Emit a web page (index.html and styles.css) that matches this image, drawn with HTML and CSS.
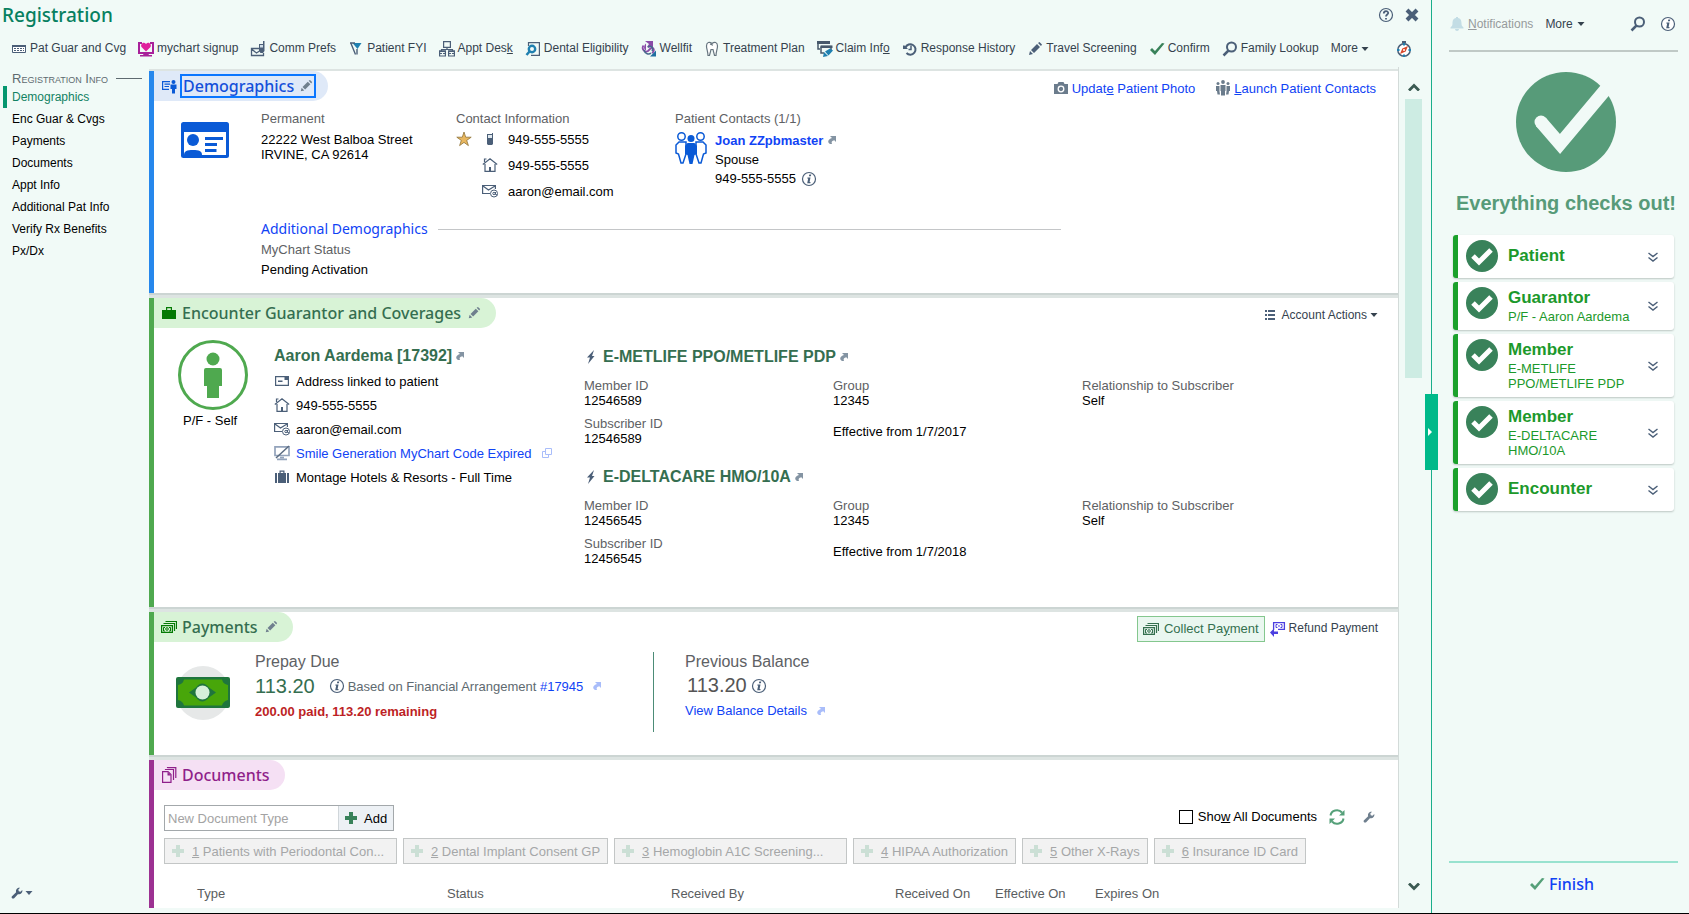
FILE: index.html
```html
<!DOCTYPE html>
<html lang="en">
<head>
<meta charset="utf-8">
<title>Registration</title>
<link rel="stylesheet" href="styles.css">
</head>
<body>
<svg class="sprite" aria-hidden="true">
  <symbol id="card" viewBox="0 0 16 16"><path d="M1.500 4.500h13v7h-13z" fill="#fff" stroke="#4b5f78"/><path d="M1 4h14v2H1z" fill="#4b5f78"/><path d="M3 7.500h10M3 9.500h10" stroke="#4b5f78" stroke-dasharray="2 1"/></symbol>
  <symbol id="mychart" viewBox="0 0 16 16"><path d="M0 1h4v2H2v8h12V3h-2V1h4v12H0z" fill="#a8219a"/><path d="M6 12h4l1 2h3v1.500H2V14h3z" fill="#a8219a"/><path d="M8 10.500 3.500 6C2 3.500 5.500 0 8 3c2.500-3 6 .5 4.500 3z" fill="#e0209c"/></symbol>
  <symbol id="comm" viewBox="0 0 16 16"><path d="M9 7.500H1.500v7h12V12M1.500 8l5 4 3-2" fill="none" stroke="#4b5f78" stroke-width="1.300"/><path d="M9 3h4V0h1.500v10l-1.500 2h-2.500L9 10z" fill="#4b5f78"/><path d="M10 4h3v2.500h-3z" fill="#cfdce6"/></symbol>
  <symbol id="flag" viewBox="0 0 16 16"><path d="M4.500 2H13.500L9.500 8z" fill="#1f80b0"/><path d="m2.800 2 4.700 11.500M9 13.500V8" fill="none" stroke="#4b5f78" stroke-width="1.400"/><path d="M2 2h5" stroke="#4b5f78" stroke-width="1.500"/></symbol>
  <symbol id="appt" viewBox="0 0 16 16"><path d="M4.600 .6h6.800v5.800H4.600zM8 6.500V9M2.500 10V8.500h11V10" fill="none" stroke="#4b5f78" stroke-width="1.200"/><path d="M0 9.500h7V11H0zm9 0h7V11H9zM1 12h2v1H1zm3 0h2v1H4zm6 0h2v1h-2zm3 0h2v1h-2z" fill="#4b5f78"/><path d="M.6 10h5.800v5H.6zm9 0h5.800v5H9.600z" fill="none" stroke="#4b5f78" stroke-width="1.200"/></symbol>
  <symbol id="dental" viewBox="0 0 16 16"><path d="M3.500 5V1.600h10.900v12.800H6" fill="none" stroke="#4b5f78" stroke-width="1.200"/><circle cx="7" cy="8" r="3.200" fill="none" stroke="#1f80b0" stroke-width="2.400"/><path d="m4.500 10.500-3 3.500" stroke="#1f80b0" stroke-width="2.500"/></symbol>
  <symbol id="wellfit" viewBox="0 0 16 16"><path d="M5 9.500C2 8 3 4 5 2.500M4 0h8v7l-2-2-2 2-2-1 2-3z" fill="#8b4ba8"/><path d="M2.500 4.500C0 8 4 12 7 10l3-3c3-1 4 3 1 5" fill="none" stroke="#8b4ba8" stroke-width="1.800"/><path d="M3 9c1 4 5 5 7 3m-3-6C10 4 13 7 11 10" fill="none" stroke="#47698c" stroke-width="1.500"/><path d="M9 15.500h6v-6z" fill="#1f6fa0"/></symbol>
  <symbol id="tooth" viewBox="0 0 16 16"><path d="M8 2.500C5.500.5 2.500 1 2.500 5c0 3 1.300 5 1.500 9.500h1.500L7 8.500h2l1.500 6H12c.2-4.500 1.500-6.500 1.500-9.500 0-4-3-4.500-5.500-2.500zM6 3l3 1.300" fill="#fff" stroke="#66757f" stroke-width="1.200"/></symbol>
  <symbol id="claim" viewBox="0 0 16 16"><path d="M0 0h13v3H0z" fill="#47586b"/><path d="M1 3v5h2M4 5.500h10V9M4 5.500V12h3" fill="none" stroke="#47586b" stroke-width="1.500"/><path d="M3.500 4.500h12v2.500h-12z" fill="#47586b"/><path d="m7 11 4 4-5 1zM8 10.500 13 7.500l3 2-4.500 5z" fill="#1f80b0"/></symbol>
  <symbol id="history" viewBox="0 0 16 16"><path d="M3.500 6.500a5.200 5.200 0 1 1 1 5.500" fill="none" stroke="#4b5f78" stroke-width="2"/><path d="M1 4.500h1.500l3.500 3.500H1z" fill="#4b5f78"/><path d="M9 4.500v4H6.500" fill="none" stroke="#4b5f78" stroke-width="1.500"/></symbol>
  <symbol id="pencil" viewBox="0 0 16 16"><path d="m2 14 1-4 3 3zm2-5 6-6 3 3-6 6zm7-7 1.500-1 2.500 2.500-1 1.500z" fill="currentColor"/></symbol>
  <symbol id="check" viewBox="0 0 16 16"><path d="m1 9 2-2 3 3 7-8 2.500.5L6 14z" fill="currentColor"/></symbol>
  <symbol id="search" viewBox="0 0 16 16"><circle cx="9.500" cy="6" r="4.500" fill="none" stroke="currentColor" stroke-width="2"/><path d="m6.500 9.500-5 5" stroke="currentColor" stroke-width="2.500"/></symbol>
  <symbol id="compass" viewBox="0 0 16 16"><circle cx="8" cy="9" r="6.200" fill="#fff" stroke="#4b5f78" stroke-width="1.500"/><path d="M6 0h4v2.500H6z" fill="#4b5f78"/><path d="M8 2v2.500M8 13.500V16M1 9h2.500m9 0H15" stroke="#1f80b0" stroke-width="2"/><path d="m4 13 2.300-5.500L12 5l-2.300 5.500z" fill="#d9482b"/><circle cx="8" cy="9" r="1" fill="#fff"/></symbol>
  <symbol id="help" viewBox="0 0 16 16"><circle cx="8" cy="8" r="6.500" fill="none" stroke="#4b5f78" stroke-width="1.200"/><path d="M5.800 6.500c0-3 4.400-3 4.400-.5C10.200 7.500 8 7.500 8 9.500M8 11v1.500" fill="none" stroke="#4b5f78" stroke-width="1.800"/></symbol>
  <symbol id="close" viewBox="0 0 16 16"><path d="m3 3 10 10M13 3 3 13" stroke="#4b5f78" stroke-width="4"/></symbol>
  <symbol id="info" viewBox="0 0 16 16"><circle cx="8" cy="8" r="6.500" fill="#fff" stroke="#4b5f78" stroke-width="1.200"/><path d="M8.300 3.500h2l-.4 1.800h-2zM6.500 6.500h3L8.600 11h1l-.3 1.200H6.200L7.200 7.600H6.200z" fill="#4b5f78"/></symbol>
  <symbol id="bell" viewBox="0 0 16 16"><path d="M7 1h2v1c3 .5 3.500 3 3.500 5.500 0 2 .5 2.500 2 4v1h-13v-1c1.500-1.500 2-2 2-4C3.500 5 4 2.500 7 2zM6 13h4c0 2.500-4 2.500-4 0z" fill="#c3dde5"/></symbol>
  <symbol id="person-card" viewBox="0 0 16 16"><path d="M8 11.400H1.600V3.600H9M3.500 6.200H9M3.500 8.500h4.500" fill="none" stroke="#0a5ad6" stroke-width="1.200"/><circle cx="12.500" cy="4" r="2" fill="#0a5ad6"/><path d="M9.500 6.500h6V11H14v4.500h-3V11H9.500z" fill="#0a5ad6"/></symbol>
  <symbol id="idcard" viewBox="0 0 48 36"><rect width="48" height="36" rx="2.500" fill="#0a5ad6"/><path d="M3 10h42v23H3z" fill="#fff"/><circle cx="12" cy="18" r="6" fill="#0a5ad6"/><path d="M3 33c0-4 3-5 9-5s9 1 9 5z" fill="#0a5ad6"/><path d="M24 16.500h18M24 22.500h12M24 28.500h11.500" stroke="#0a5ad6" stroke-width="3"/></symbol>
  <symbol id="star" viewBox="0 0 16 16"><path d="m8 1 1.700 5.200h5.500l-4.500 3.200 1.700 5.200L8 11.400l-4.400 3.200 1.700-5.200L.8 6.200h5.500z" fill="#e9b75f" stroke="#8f7338" stroke-width=".8"/></symbol>
  <symbol id="phone" viewBox="0 0 16 16"><path d="M5 3h5V2h1v11l-1 1H6l-1-1z" fill="#4b5f78"/><path d="M6 4h4v3H6z" fill="#dfe8ee"/></symbol>
  <symbol id="home" viewBox="0 0 16 16"><path d="M3 7v7.400h10V7M.8 7.500 8 1.800l7.200 5.700M2.500 5V2h2M8 14v-4" fill="none" stroke="#4b5f78" stroke-width="1.200"/><path d="M7 10h2v4H7z" fill="#4b5f78"/></symbol>
  <symbol id="mail" viewBox="0 0 16 16"><path d="M8 10.500H.6v-8h12.800V6M1 3l5.500 4L13 3" fill="none" stroke="#4b5f78" stroke-width="1.200"/><circle cx="12" cy="10.500" r="3.500" fill="#fff" stroke="#4b5f78"/><circle cx="12" cy="10.500" r="1.200" fill="none" stroke="#4b5f78"/><path d="M13.500 9v2.500l2 .5" fill="none" stroke="#4b5f78"/></symbol>
  <symbol id="people-big" viewBox="0 0 32 32"><g fill="#fff" stroke="#0a5ad6" stroke-width="1.500"><circle cx="6.500" cy="4.500" r="3.700"/><circle cx="25.500" cy="4.500" r="3.700"/><path d="M11 10H4l-3 3v8l2.500 1L6 31h2l3-9zm10 0h7l3 3v8l-2.500 1L26 31h-2l-3-9z"/></g><circle cx="16" cy="6.500" r="3.500" fill="#0a5ad6"/><path d="M12.500 11h7l2.500 3v8l-2.500 1L17.500 32h-3l-2-9L10 22v-8z" fill="#0a5ad6"/></symbol>
  <symbol id="jump" viewBox="0 0 10 10"><path d="M3 1h6v6L7.300 5.300C5 5.500 4 7 5 9H3C0 7.500 1 4 5 3z" fill="currentColor"/></symbol>
  <symbol id="camera" viewBox="0 0 16 16"><path d="M1 4h3.500l1-2h5l1 2H15v10H1z" fill="#6b7c8c"/><circle cx="8" cy="9" r="2.800" fill="#6b7c8c" stroke="#fff" stroke-width="1.300"/></symbol>
  <symbol id="people" viewBox="0 0 16 16"><g fill="#6b7c8c"><circle cx="8" cy="2" r="1.900"/><circle cx="3" cy="3.500" r="1.500"/><circle cx="13" cy="3.500" r="1.500"/><path d="M5.500 5h5v6H10v4.500H6V11h-.5zM1 6h3.500v5.500L5 14.500H2.500L2 11H1zm14 0h-3.500v5.500l-.5 3h2.500L14 11h1z"/></g></symbol>
  <symbol id="briefcase" viewBox="0 0 16 16"><path d="M1 5h4V2h6v3h4v9H1zm5.200 0h3.600V3.200H6.200z" fill="#047a04" fill-rule="evenodd"/></symbol>
  <symbol id="man" viewBox="0 0 70 70"><circle cx="35" cy="35" r="33.500" fill="#fff" stroke="#4fa94f" stroke-width="3"/><circle cx="35" cy="19" r="6.500" fill="#4fa94f"/><path d="M26 30q0-2 2-2h14q2 0 2 2v16h-3v12H29V46h-3z" fill="#4fa94f"/></symbol>
  <symbol id="letter" viewBox="0 0 16 16"><path d="M1.600 3.600h12.800v8.800H1.600z" fill="#fff" stroke="#4b5f78" stroke-width="1.200"/><path d="M10.500 4h3.500v3h-3.500zM4 7.500h4.500V9H4z" fill="#4b5f78"/></symbol>
  <symbol id="screen-off" viewBox="0 0 16 16"><path d="M1 1.800h14v8.700H1zM3 14.300h10M6 12.500h4" fill="none" stroke="#93a3bb" stroke-width="1.700"/><path d="M2 13 15 1" stroke="#5a6b80" stroke-width="1.500"/></symbol>
  <symbol id="suitcase" viewBox="0 0 16 16"><path d="M1 4h2v10H1zm12 0h2v10h-2zM4 4h1.500V1.500h5V4H12v10H4zm2.700 0h2.600V2.800H6.700z" fill="#4b5f78" fill-rule="evenodd"/></symbol>
  <symbol id="copy" viewBox="0 0 10 10"><path d="M3.500.5h6v6h-6zM3 3.500H.5v6h6V7" fill="none" stroke="#a9bdfa"/></symbol>
  <symbol id="bolt" viewBox="0 0 16 16"><path d="M10 1 3 8.500h3L4 15l6.500-8H8z" fill="#4b5f78"/></symbol>
  <symbol id="list" viewBox="0 0 16 16"><path d="M2 4h2m1 0h7M2 8h2m1 0h7M2 12h2m1 0h7" stroke="#4b5f78" stroke-width="1.800"/></symbol>
  <symbol id="cash" viewBox="0 0 16 16"><path d="M.6 6.600h10.800v6.800H.6zM2.500 4.500h11V12M4.500 2.500h11V10" fill="none" stroke="currentColor" stroke-width="1.200"/><path d="M4 8.500H2.500V12H4M8 8.500h1.500V12H8" fill="none" stroke="currentColor"/><circle cx="6" cy="10" r="1.300" fill="none" stroke="currentColor"/></symbol>
  <symbol id="refund" viewBox="0 0 16 16"><path d="M3.600 9V1.600h10.800v6.800H8" fill="none" stroke="#4c3fe0" stroke-width="1.300"/><path d="M7.500 3.500H6v3h1.500m3-3H12v3h-1.500M9 4v2" fill="none" stroke="#4c3fe0"/><path d="m0 11.500 4-4v3h4V13H4v3z" fill="#4c3fe0"/></symbol>
  <symbol id="bill" viewBox="0 0 54 54"><circle cx="27" cy="27" r="27" fill="#e6e8e8"/><rect y="11" width="54" height="31" rx="2" fill="#1f753d"/><path d="M8 13.500h38q1 4.500 6 5.500v15q-5 1-6 5.500H8Q7 35 2 34V19q5-1 6-5.500z" fill="#48a60a"/><path d="m13 26.500 7-5q6-8 13 0l7 5-7 5q-7 8-13 0z" fill="#1f753d"/><circle cx="26.500" cy="26.500" r="7" fill="#d6f0d9"/></symbol>
  <symbol id="docs" viewBox="0 0 16 16"><path d="M1.600 4.600H7l3 3v7.800H1.600zM4.500 3V2.500h8V13M6.500 1V.6h8.300V11" fill="none" stroke="#8f1f8a" stroke-width="1.200"/><path d="M6.500 5v3.500H10z" fill="#8f1f8a"/></symbol>
  <symbol id="plus" viewBox="0 0 12 12"><path d="M4 0h4v4h4v4H8v4H4V8H0V4h4z" fill="currentColor"/></symbol>
  <symbol id="refresh" viewBox="0 0 16 16"><path d="M1.500 6.500a6.500 6 0 0 1 11.500-3M14.500 9.500a6.500 6 0 0 1-11.500 3" fill="none" stroke="#55a079" stroke-width="2"/><path d="M15.500 1v5.500H10zM.5 15V9.500H6z" fill="#55a079"/></symbol>
  <symbol id="wrench" viewBox="0 0 16 16"><path d="m2 12 5-5c-.8-3 1.500-5.800 4.500-5L9.500 4l.5 2 2 .5 2-2c.8 3-2 5.500-5 5L4.500 14.200C3 15 1.200 13.500 2 12z" fill="currentColor"/></symbol>
  <symbol id="caret" viewBox="0 0 8 8"><path d="M.5 2h7L4 6z" fill="currentColor"/></symbol>
  <symbol id="up" viewBox="0 0 12 8"><path d="m1 7.500 5-5 5 5" fill="none" stroke="#3b5a52" stroke-width="2.800"/></symbol>
  <symbol id="down" viewBox="0 0 12 8"><path d="m1 .5 5 5 5-5" fill="none" stroke="#3b5a52" stroke-width="2.800"/></symbol>
  <symbol id="bigcheck" viewBox="0 0 100 100"><circle cx="50" cy="50" r="50" fill="#579b79"/><path d="M25 50 44 72 96 10" fill="none" stroke="#f1faf7" stroke-width="13"/><circle cx="25" cy="50" r="6.500" fill="#f1faf7"/></symbol>
  <symbol id="ok" viewBox="0 0 32 32"><circle cx="16" cy="16" r="16" fill="#39825a"/><path d="m7 16 6 6 12-12" fill="none" stroke="#fff" stroke-width="5"/></symbol>
  <symbol id="chevrons" viewBox="0 0 10 10"><path d="m.5 1 4.500 3.500L9.500 1m-9 4.500L5 9l4.500-3.500" fill="none" stroke="#4b5f78" stroke-width="1.400"/></symbol>
</svg>

<div class="app">
  <main class="main">
    <header class="titlebar">
      <h1>Registration</h1>
      <button class="plain" aria-label="Help"><svg class="icon"><use href="#help"/></svg></button>
      <button class="plain" aria-label="Close"><svg class="icon"><use href="#close"/></svg></button>
    </header>
    <div class="toolbar" role="toolbar">
      <button class="tool"><svg class="icon"><use href="#card"/></svg>Pat Guar and Cvg</button>
      <button class="tool"><svg class="icon"><use href="#mychart"/></svg>mychart signup</button>
      <button class="tool"><svg class="icon"><use href="#comm"/></svg>Comm Prefs</button>
      <button class="tool"><svg class="icon"><use href="#flag"/></svg>Patient FYI</button>
      <button class="tool"><svg class="icon"><use href="#appt"/></svg><span>Appt Des<u>k</u></span></button>
      <button class="tool"><svg class="icon"><use href="#dental"/></svg>Dental Eligibility</button>
      <button class="tool"><svg class="icon"><use href="#wellfit"/></svg>Wellfit</button>
      <button class="tool"><svg class="icon"><use href="#tooth"/></svg>Treatment Plan</button>
      <button class="tool"><svg class="icon"><use href="#claim"/></svg><span>Claim Inf<u>o</u></span></button>
      <button class="tool"><svg class="icon"><use href="#history"/></svg>Response History</button>
      <button class="tool"><svg class="icon slate"><use href="#pencil"/></svg>Travel Screening</button>
      <button class="tool"><svg class="icon green"><use href="#check"/></svg>Confirm</button>
      <button class="tool"><svg class="icon slate"><use href="#search"/></svg>Family Lookup</button>
      <button class="tool">More<svg class="caret"><use href="#caret"/></svg></button>
      <button class="tool compass" aria-label="Navigator"><svg class="icon"><use href="#compass"/></svg></button>
    </div>

    <div class="workspace">
      <nav class="nav">
        <h2>Registration Info</h2>
        <ul>
          <li class="active"><a href="#demographics">Demographics</a></li>
          <li><a href="#coverages">Enc Guar &amp; Cvgs</a></li>
          <li><a href="#payments">Payments</a></li>
          <li><a href="#documents">Documents</a></li>
          <li><a href="#appt-info">Appt Info</a></li>
          <li><a href="#additional">Additional Pat Info</a></li>
          <li><a href="#benefits">Verify Rx Benefits</a></li>
          <li><a href="#pxdx">Px/Dx</a></li>
        </ul>
        <button class="plain settings slate" aria-label="Settings"><svg class="icon small"><use href="#wrench"/></svg><svg class="caret"><use href="#caret"/></svg></button>
      </nav>

      <div class="content">
        <section class="panel blue" id="demographics">
          <header class="panel-head">
            <div class="tab"><svg class="icon"><use href="#person-card"/></svg><h2 class="focused">Demographics <svg class="icon edit"><use href="#pencil"/></svg></h2></div>
            <div class="actions wide">
              <a href="#photo"><svg class="icon"><use href="#camera"/></svg><span>Updat<u>e</u> Patient Photo</span></a>
              <a href="#contacts"><svg class="icon"><use href="#people"/></svg><span><u>L</u>aunch Patient Contacts</span></a>
            </div>
          </header>
          <div class="demo">
            <svg class="idcard"><use href="#idcard"/></svg>
            <div>
              <h3 class="label">Permanent</h3>
              <p class="address">22222 West Balboa Street<br>IRVINE, CA 92614</p>
            </div>
            <div>
              <h3 class="label">Contact Information</h3>
              <ul class="contact">
                <li><svg class="icon"><use href="#star"/></svg><svg class="icon"><use href="#phone"/></svg>949-555-5555</li>
                <li><span class="icon"></span><svg class="icon"><use href="#home"/></svg>949-555-5555</li>
                <li><span class="icon"></span><svg class="icon"><use href="#mail"/></svg>aaron@email.com</li>
              </ul>
            </div>
            <div>
              <h3 class="label">Patient Contacts (1/1)</h3>
              <div class="relative">
                <svg class="people-big"><use href="#people-big"/></svg>
                <div>
                  <p><a class="strong" href="#joan">Joan ZZpbmaster</a> <svg class="jump"><use href="#jump"/></svg></p>
                  <p>Spouse</p>
                  <p class="inline">949-555-5555 <svg class="icon"><use href="#info"/></svg></p>
                </div>
              </div>
            </div>
          </div>
          <div class="more-demo">
            <h3><a href="#more-demo">Additional Demographics</a></h3>
            <p class="label">MyChart Status</p>
            <p>Pending Activation</p>
          </div>
        </section>

        <section class="panel green-panel" id="coverages">
          <header class="panel-head">
            <div class="tab"><svg class="icon"><use href="#briefcase"/></svg><h2>Encounter Guarantor and Coverages <svg class="icon edit"><use href="#pencil"/></svg></h2></div>
            <div class="actions"><button class="tool"><svg class="icon"><use href="#list"/></svg>Account Actions<svg class="caret"><use href="#caret"/></svg></button></div>
          </header>
          <div class="coverage">
            <figure class="who"><svg class="man"><use href="#man"/></svg><figcaption>P/F - Self</figcaption></figure>
            <div class="guarantor">
              <h3 class="name">Aaron Aardema [17392]<svg class="jump"><use href="#jump"/></svg></h3>
              <ul>
                <li><svg class="icon"><use href="#letter"/></svg>Address linked to patient</li>
                <li><svg class="icon"><use href="#home"/></svg>949-555-5555</li>
                <li><svg class="icon"><use href="#mail"/></svg>aaron@email.com</li>
                <li><svg class="icon"><use href="#screen-off"/></svg><a href="#code">Smile Generation MyChart Code Expired</a><svg class="copy"><use href="#copy"/></svg></li>
                <li><svg class="icon"><use href="#suitcase"/></svg>Montage Hotels &amp; Resorts - Full Time</li>
              </ul>
            </div>
            <div class="plans">
              <article>
                <h3 class="name"><svg class="icon"><use href="#bolt"/></svg>E-METLIFE PPO/METLIFE PDP<svg class="jump"><use href="#jump"/></svg></h3>
                <dl class="plan">
                  <div><dt>Member ID</dt><dd>12546589</dd></div>
                  <div><dt>Group</dt><dd>12345</dd></div>
                  <div><dt>Relationship to Subscriber</dt><dd>Self</dd></div>
                  <div><dt>Subscriber ID</dt><dd>12546589</dd></div>
                  <div><dd>Effective from 1/7/2017</dd></div>
                </dl>
              </article>
              <article>
                <h3 class="name"><svg class="icon"><use href="#bolt"/></svg>E-DELTACARE HMO/10A<svg class="jump"><use href="#jump"/></svg></h3>
                <dl class="plan">
                  <div><dt>Member ID</dt><dd>12456545</dd></div>
                  <div><dt>Group</dt><dd>12345</dd></div>
                  <div><dt>Relationship to Subscriber</dt><dd>Self</dd></div>
                  <div><dt>Subscriber ID</dt><dd>12456545</dd></div>
                  <div><dd>Effective from 1/7/2018</dd></div>
                </dl>
              </article>
            </div>
          </div>
        </section>

        <section class="panel green-panel" id="payments">
          <header class="panel-head">
            <div class="tab"><svg class="icon cash"><use href="#cash"/></svg><h2>Payments <svg class="icon edit"><use href="#pencil"/></svg></h2></div>
            <div class="actions tight">
              <button class="collect"><svg class="icon"><use href="#cash"/></svg><span>Collect Pa<u>y</u>ment</span></button>
              <button class="tool"><svg class="icon"><use href="#refund"/></svg>Refund Payment</button>
            </div>
          </header>
          <div class="pay">
            <svg class="bill"><use href="#bill"/></svg>
            <div class="prepay">
              <h3>Prepay Due</h3>
              <p class="amount"><strong>113.20</strong><svg class="icon"><use href="#info"/></svg><span>Based on Financial Arrangement <a href="#17945">#17945</a></span><svg class="jump pale"><use href="#jump"/></svg></p>
              <p class="due">200.00 paid, 113.20 remaining</p>
            </div>
            <div class="previous">
              <h3>Previous Balance</h3>
              <p class="amount"><strong>113.20</strong><svg class="icon"><use href="#info"/></svg></p>
              <p class="details"><a href="#balance">View Balance Details</a><svg class="jump pale"><use href="#jump"/></svg></p>
            </div>
          </div>
        </section>

        <section class="panel purple" id="documents">
          <header class="panel-head"><div class="tab"><svg class="icon"><use href="#docs"/></svg><h2>Documents</h2></div></header>
          <div class="doc-bar">
            <div class="new-doc"><input type="text" aria-label="New Document Type" placeholder="New Document Type"><button><svg class="plus"><use href="#plus"/></svg>Add</button></div>
            <div class="doc-tools">
              <label><input type="checkbox"><span>Sho<u>w</u> All Documents</span></label>
              <button class="plain" aria-label="Refresh"><svg class="icon"><use href="#refresh"/></svg></button>
              <button class="plain wrench" aria-label="Configure"><svg class="icon small"><use href="#wrench"/></svg></button>
            </div>
          </div>
          <div class="quick">
            <button class="long" disabled><svg class="plus"><use href="#plus"/></svg><span><u>1</u> Patients with Periodontal Con...</span></button>
            <button disabled><svg class="plus"><use href="#plus"/></svg><span><u>2</u> Dental Implant Consent GP</span></button>
            <button class="long" disabled><svg class="plus"><use href="#plus"/></svg><span><u>3</u> Hemoglobin A1C Screening...</span></button>
            <button disabled><svg class="plus"><use href="#plus"/></svg><span><u>4</u> HIPAA Authorization</span></button>
            <button disabled><svg class="plus"><use href="#plus"/></svg><span><u>5</u> Other X-Rays</span></button>
            <button disabled><svg class="plus"><use href="#plus"/></svg><span><u>6</u> Insurance ID Card</span></button>
          </div>
          <table class="doc-table">
            <colgroup><col class="c-type"><col class="c-mid"><col class="c-mid"><col class="c-date"><col class="c-date"><col></colgroup>
            <thead><tr><th>Type</th><th>Status</th><th>Received By</th><th>Received On</th><th>Effective On</th><th>Expires On</th></tr></thead>
          </table>
        </section>
      </div>

      <div class="scroll">
        <button class="plain" aria-label="Scroll up"><svg class="arrow"><use href="#up"/></svg></button>
        <div class="track"><div class="thumb"></div></div>
        <button class="plain" aria-label="Scroll down"><svg class="arrow"><use href="#down"/></svg></button>
      </div>
    </div>
  </main>

  <aside class="side">
    <button class="handle" aria-label="Collapse sidebar"></button>
    <header class="side-head">
      <button class="tool muted" disabled><svg class="icon"><use href="#bell"/></svg><span><u>N</u>otifications</span></button>
      <button class="tool">More<svg class="caret"><use href="#caret"/></svg></button>
      <button class="plain slate push" aria-label="Search"><svg class="icon"><use href="#search"/></svg></button>
      <button class="plain" aria-label="Information"><svg class="icon"><use href="#info"/></svg></button>
    </header>
    <div class="summary">
      <svg class="bigcheck"><use href="#bigcheck"/></svg>
      <h2 class="verdict">Everything checks out!</h2>
    </div>
    <ul class="checks">
      <li><svg class="ok"><use href="#ok"/></svg><div class="solo"><h3>Patient</h3></div><button class="plain" aria-label="Expand"><svg class="chev"><use href="#chevrons"/></svg></button></li>
      <li><svg class="ok"><use href="#ok"/></svg><div><h3>Guarantor</h3><p>P/F - Aaron Aardema</p></div><button class="plain" aria-label="Expand"><svg class="chev"><use href="#chevrons"/></svg></button></li>
      <li><svg class="ok"><use href="#ok"/></svg><div><h3>Member</h3><p>E-METLIFE PPO/METLIFE PDP</p></div><button class="plain" aria-label="Expand"><svg class="chev"><use href="#chevrons"/></svg></button></li>
      <li><svg class="ok"><use href="#ok"/></svg><div><h3>Member</h3><p>E-DELTACARE HMO/10A</p></div><button class="plain" aria-label="Expand"><svg class="chev"><use href="#chevrons"/></svg></button></li>
      <li><svg class="ok"><use href="#ok"/></svg><div class="solo"><h3>Encounter</h3></div><button class="plain" aria-label="Expand"><svg class="chev"><use href="#chevrons"/></svg></button></li>
    </ul>
    <footer class="finish"><button class="plain"><svg class="icon"><use href="#check"/></svg>Finish</button></footer>
  </aside>
</div>
</body>
</html>
```

FILE: styles.css
```css
* { box-sizing: border-box; margin: 0; padding: 0; }

body {
  height: 100vh;
  overflow: hidden;
  border-bottom: 1px solid #000;
  background: #f1faf7;
  color: #000;
  font: 13px/15px "Liberation Sans", Arial, sans-serif;
}

ul { list-style: none; }
a { color: #1043f5; text-decoration: none; }
button { font: inherit; color: inherit; cursor: pointer; }
svg { display: block; flex: none; }
.sprite { position: absolute; width: 0; height: 0; }

.icon { flex: none; width: 16px; height: 16px; }
.icon.small, .icon.edit { width: 14px; height: 14px; }
.caret { width: 8px; height: 8px; }
.jump { display: inline-block; width: 10px; height: 10px; color: #8494a3; }
.jump.pale { color: #a9bdfa; }
.slate { color: #4b5f78; }
.green { color: #39825a; }
.plain { display: flex; align-items: center; border: 0; background: none; }
.tool {
  display: flex;
  align-items: center;
  gap: 3px;
  border: 0;
  background: none;
  color: #35424e;
  font-size: 12px;
  white-space: nowrap;
}
.label, dt { color: #5e6164; font-size: 13px; font-weight: normal; }

.app { display: grid; grid-template-columns: minmax(0, 1fr) 257px; height: 100%; }
.main {
  display: flex;
  flex-direction: column;
  min-width: 0;
  min-height: 0;
  padding-bottom: 5px;
  border-right: 1px solid #1aae8b;
}

.titlebar { display: flex; align-items: center; gap: 10px; height: 30px; padding: 0 11px 0 2px; }
.titlebar h1 { flex: 1; color: #078060; font: 500 19px/30px "Noto Sans", sans-serif; }
.toolbar { display: flex; align-items: center; gap: 12px; height: 37px; padding: 0 19px 0 11px; }
.compass { margin-left: auto; }

.workspace { display: flex; flex: 1; min-height: 0; }
.nav { display: flex; flex-direction: column; width: 149px; padding: 4px 0 8px 3px; font-size: 12px; }
.nav h2 {
  display: flex;
  align-items: center;
  gap: 8px;
  padding: 0 7px 0 9px;
  color: #5e6a70;
  font-size: 13px;
  font-variant: small-caps;
  font-weight: normal;
  white-space: nowrap;
}
.nav h2::after { content: ""; flex: 1; height: 1px; background: #5e6a70; }
.nav li { padding-left: 5px; border-left: 4px solid transparent; line-height: 22px; }
.nav li a { color: #000; }
.nav li.active { border-color: #05966f; }
.nav li.active a { color: #128263; }
.settings { margin-top: auto; padding-left: 7px; gap: 1px; }

.content {
  flex: 1;
  display: flex;
  flex-direction: column;
  gap: 5px;
  min-width: 0;
  margin-top: 2px;
  overflow: hidden;
  border-top: 2px solid #dde4e2;
  background: #dde4e2;
}
.panel {
  flex: none;
  border-left: 5px solid;
  background: linear-gradient(#fff, #fff) padding-box;
  box-shadow: 0 2px 0 #ccd5d3;
}
.panel.blue { border-color: #2687ec; }
.panel.green-panel { border-color: #4fa94f; }
.panel.purple { border-color: #9c3192; }

.panel-head { display: flex; justify-content: space-between; height: 30px; }
.tab {
  display: flex;
  align-items: center;
  gap: 5px;
  height: 30px;
  padding: 0 15px 0 7px;
  border-radius: 0 15px 15px 0;
}
.tab h2 {
  display: flex;
  align-items: center;
  gap: 6px;
  font: 500 16px/22px "Noto Sans", sans-serif;
  white-space: nowrap;
}
.tab .edit { color: #6f7f8e; }
.blue .tab { gap: 3px; padding-right: 12px; background: #dfe9f8; }
.blue h2 { color: #1450da; }
.tab .focused { gap: 5px; padding: 0 1px; border: 2px solid #0a76ff; line-height: 20px; }
.green-panel .tab { background: #d8f3d6; }
.green-panel h2 { color: #356e50; }
.purple .tab { background: #f5e0f4; }
.purple h2 { color: #8f1f8a; }
.cash { color: #047a04; }
.actions { display: flex; align-items: center; gap: 5px; padding: 4px 20px 0 0; }
.actions a { display: flex; align-items: center; gap: 3px; white-space: nowrap; }
.actions.wide { gap: 20px; padding-right: 22px; }
.actions.tight { padding-top: 3px; }

.demo { display: grid; grid-template-columns: 80px 195px 219px 1fr; padding: 10px 0 0 27px; }
.idcard { width: 48px; height: 36px; margin-top: 11px; }
.address { margin-top: 6px; }
.contact li { display: flex; align-items: center; height: 26px; }
.contact .icon + .icon { margin: 0 10px; }
.relative { display: flex; gap: 8px; margin-top: 5px; line-height: 19px; }
.inline { display: flex; align-items: center; gap: 5px; }
.people-big { width: 32px; height: 32px; margin-top: 1px; }
.strong { font-weight: bold; }
.more-demo { max-width: 907px; padding: 14px 0 13px 107px; line-height: 20px; }
.more-demo h3 { display: flex; align-items: center; gap: 10px; font: 14px/22px "Noto Sans", sans-serif; }
.more-demo h3::after { content: ""; flex: 1; height: 1px; background: #c4c6c8; }

.coverage { display: grid; grid-template-columns: 96px 310px 1fr; padding: 12px 0 41px 24px; }
.who { width: 70px; }
.man { width: 70px; height: 70px; margin-bottom: 3px; }
.who figcaption { padding-left: 5px; }
.name { display: flex; align-items: center; gap: 3px; color: #356e50; font-size: 16px; line-height: 26px; }
.guarantor { margin-top: 3px; }
.plans { margin-top: 4px; }
.guarantor li { display: flex; align-items: center; gap: 6px; height: 24px; }
.copy { width: 10px; height: 10px; margin-left: 4px; }
.plans { display: grid; gap: 18px; }
.plan {
  display: grid;
  grid-template-columns: 249px 249px 1fr;
  align-items: center;
  row-gap: 8px;
  margin-top: 8px;
}

.pay { display: flex; padding: 10px 0 23px 22px; }
.bill { width: 54px; height: 54px; margin-top: 14px; }
.pay h3 { color: #5e6164; font-size: 16px; font-weight: normal; line-height: 20px; }
.prepay { width: 398px; margin-left: 25px; }
.amount { display: flex; align-items: center; gap: 3px; height: 28px; color: #5e6a70; }
.amount strong { font-size: 20px; font-weight: normal; color: #555; }
.prepay .amount strong { margin-right: 11px; color: #356e50; }
.prepay .jump { margin-left: 6px; }
.due { color: #bd1f25; font-weight: bold; line-height: 24px; }
.previous { padding: 0 0 10px 31px; border-left: 1px solid #4c8c77; }
.previous .amount { padding-left: 2px; gap: 4px; height: 27px; }
.details { display: flex; align-items: center; gap: 9px; line-height: 23px; }

.collect {
  display: flex;
  align-items: center;
  gap: 5px;
  height: 26px;
  padding: 0 5px;
  border: 1px solid #84c78e;
  background: #eaf7f0;
  color: #35704f;
}

#documents { flex: 1 0 auto; }
.doc-bar { display: flex; justify-content: space-between; margin: 15px 22px 7px 10px; }
.new-doc { display: flex; height: 26px; border: 1px solid #a3a8ab; background: #fff; }
.new-doc input { width: 173px; padding: 0 3px; border: 0; font: inherit; }
.new-doc input::placeholder { color: #a3a3a3; }
.new-doc button {
  display: flex;
  align-items: center;
  gap: 7px;
  padding: 0 6px;
  border: 0;
  border-left: 1px solid #d0d6da;
  background: #edf1f5;
}
.plus { width: 12px; height: 12px; color: #39825a; }
.doc-tools { display: flex; align-items: center; gap: 12px; padding-bottom: 3px; }
.doc-tools label { display: flex; align-items: center; gap: 5px; }
.doc-tools input { width: 14px; height: 14px; border: 1px solid #000; background: #fff; appearance: none; }
.wrench { padding-left: 5px; color: #6f7f8e; }
.quick { display: flex; gap: 6px; margin-left: 10px; }
.quick button {
  display: flex;
  align-items: center;
  gap: 8px;
  height: 26px;
  padding: 0 7px;
  border: 1px solid #c3c6c6;
  background: #f2f2f2;
  color: #a5a7a8;
  white-space: nowrap;
}
.quick .long { width: 233px; }
.quick .plus { color: #cbdfd5; }
.doc-table { width: calc(100% - 43px); margin: 20px 0 0 43px; table-layout: fixed; border-collapse: collapse; }
.doc-table th { color: #5a5d60; font-weight: normal; line-height: 20px; text-align: left; }
.c-type { width: 250px; }
.c-mid { width: 224px; }
.c-date { width: 100px; }

.scroll {
  display: flex;
  flex-direction: column;
  align-items: center;
  width: 33px;
  padding: 16px 3px 17px 0;
  border-left: 1px solid #d3dbd9;
}
.arrow { width: 12px; height: 8px; }
.track { flex: 1; width: 17px; padding: 8px 0; }
.thumb { height: 36%; background: #cdece3; }

.side {
  position: relative;
  display: flex;
  flex-direction: column;
  padding: 0 11px 0 17px;
}
.handle {
  position: absolute;
  left: -7px;
  top: 394px;
  width: 13px;
  height: 76px;
  border: 0;
  background: #00b98a;
}
.handle::after {
  content: "";
  display: block;
  width: 4px;
  margin: 0 auto;
  border: 4px solid transparent;
  border-left-color: #fff;
  border-right: 0;
}
.side-head {
  display: flex;
  align-items: center;
  gap: 12px;
  height: 52px;
  padding: 0 2px 2px 0;
  border-bottom: 2px solid #c0c9c6;
}
.side-head .tool { gap: 4px; }
.side-head .muted { color: #969a9c; gap: 3px; }
.push { margin: 0 2px 0 auto; }
.summary { padding-left: 5px; }
.bigcheck { width: 100px; height: 100px; margin: 20px auto; }
.verdict { color: #579b79; font-size: 20px; line-height: 22px; text-align: center; white-space: nowrap; }
.checks { display: grid; gap: 4px; margin: 21px 4px 0; }
.checks li {
  display: flex;
  gap: 10px;
  padding: 5px 16px 5px 8px;
  border-left: 5px solid #1ba12b;
  border-radius: 3px;
  background: #fff;
  box-shadow: 0 1px 2px #bcc6c3;
  color: #1c992b;
}
.checks div { flex: 1; padding-bottom: 1px; }
.checks .solo { padding: 5px 0 6px; }
.checks h3 { font-size: 17px; line-height: 22px; }
.ok { width: 32px; height: 32px; }
.chev { width: 10px; height: 10px; }
.finish { display: flex; justify-content: center; height: 52px; margin-top: auto; padding: 0 4px 8px 0; border-top: 2px solid #98e2cf; }
.finish button { gap: 4px; color: #1043f5; font: 500 16px/22px "Noto Sans", sans-serif; }
.finish .icon { color: #55a079; }
```
